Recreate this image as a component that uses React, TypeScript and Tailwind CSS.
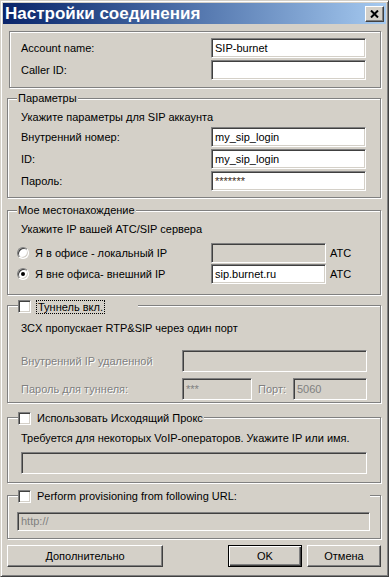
import React from "react";

const SUNKEN =
  "border border-t-[#808080] border-l-[#808080] border-b-white border-r-white shadow-[inset_1px_1px_0_#404040,inset_-1px_-1px_0_#d4d0c8]";
const GROUP =
  "border border-[#808080] shadow-[inset_1px_1px_0_#fff,1px_1px_0_#fff] flex flex-col";
const DIS = "text-[#808080] [text-shadow:1px_1px_0_#fff]";

function Field({
  className,
  value = "",
  disabled = false,
  valueClass = "",
}: {
  className: string;
  value?: string;
  disabled?: boolean;
  valueClass?: string;
}) {
  return (
    <div
      className={`${SUNKEN} ${className} ${
        disabled ? "bg-[#d4d0c8] text-[#808080]" : "bg-white text-black"
      } flex items-center pl-[3px] overflow-hidden whitespace-nowrap`}
    >
      <span className={valueClass}>{value}</span>
    </div>
  );
}

function Check() {
  return <div className={`${SUNKEN} w-[13px] h-[13px] bg-white shrink-0`} />;
}

function Radio({ checked = false }: { checked?: boolean }) {
  return (
    <div className="w-[12px] h-[12px] rounded-full border border-t-[#808080] border-l-[#808080] border-b-white border-r-white shadow-[inset_1px_1px_0_#404040,inset_-1px_-1px_0_#d4d0c8] bg-white flex items-center justify-center shrink-0">
      {checked && <div className="w-[4px] h-[4px] rounded-full bg-black" />}
    </div>
  );
}

export default function App() {
  return (
    <div className="w-[389px] h-[577px] bg-[#d4d0c8] border border-t-[#d4d0c8] border-l-[#d4d0c8] border-b-[#404040] border-r-[#404040] shadow-[inset_1px_1px_0_#fff,inset_-1px_-1px_0_#808080] p-[2px] flex flex-col font-['Liberation_Sans',Arial,sans-serif] text-[11px] leading-[15px] text-black overflow-hidden">
      {/* Title bar */}
      <div className="h-[21px] shrink-0 flex items-center pl-[2px] pr-[2px] bg-gradient-to-r from-[#0a246a] to-[#a6caf0]">
        <span className="text-white font-bold text-[17px] leading-[21px] flex-1">
          Настройки соединения
        </span>
        <div className="w-[19px] h-[16px] bg-[#d4d0c8] border border-t-white border-l-white border-b-[#404040] border-r-[#404040] shadow-[inset_-1px_-1px_0_#808080] flex items-center justify-center">
          <svg width="9" height="8" viewBox="0 0 9 8">
            <path d="M1 0.5 L8 7.5 M8 0.5 L1 7.5" stroke="#000" strokeWidth="2" />
          </svg>
        </div>
      </div>

      {/* Group 1 */}
      <div className={`${GROUP} ml-[6px] mt-[7px] w-[372px] h-[57px] pt-[6px] pl-[11px] gap-[2px] shrink-0`}>
        <div className="flex items-center h-[20px]">
          <span className="w-[190px]">Account name:</span>
          <Field className="w-[155px] h-[20px]" value="SIP-burnet" />
        </div>
        <div className="flex items-center h-[20px]">
          <span className="w-[190px]">Caller ID:</span>
          <Field className="w-[155px] h-[20px]" />
        </div>
      </div>

      {/* Group 2 */}
      <div className={`${GROUP} ml-[4px] mt-[10px] w-[374px] h-[100px] shrink-0`}>
        <span className="-mt-[8px] ml-[9px] self-start px-[1px] bg-[#d4d0c8]">Параметры</span>
        <div className="pl-[13px] mt-[4px]">Укажите параметры для SIP аккаунта</div>
        <div className="pl-[13px] mt-[2px] flex flex-col gap-[2px]">
          <div className="flex items-center h-[20px]">
            <span className="w-[190px]">Внутренний номер:</span>
            <Field className="w-[155px] h-[20px]" value="my_sip_login" />
          </div>
          <div className="flex items-center h-[20px]">
            <span className="w-[190px]">ID:</span>
            <Field className="w-[155px] h-[20px]" value="my_sip_login" />
          </div>
          <div className="flex items-center h-[20px]">
            <span className="w-[190px]">Пароль:</span>
            <Field className="w-[155px] h-[20px]" value="*******" valueClass="text-[11px] text-[#3a2a20]" />
          </div>
        </div>
      </div>

      {/* Group 3 */}
      <div className={`${GROUP} ml-[4px] mt-[12px] w-[374px] h-[85px] shrink-0`}>
        <span className="-mt-[8px] ml-[9px] self-start px-[1px] bg-[#d4d0c8]">Мое местонахождение</span>
        <div className="pl-[13px] mt-[4px]">Укажите IP вашей АТС/SIP сервера</div>
        <div className="pl-[9px] mt-[6px] flex flex-col gap-[1px]">
          <div className="flex items-center h-[20px]">
            <div className="w-[194px] flex items-center gap-[6px]">
              <Radio />
              <span>Я в офисе - локальный IP</span>
            </div>
            <Field className="w-[115px] h-[20px]" disabled />
            <span className="ml-[4px]">АТС</span>
          </div>
          <div className="flex items-center h-[20px]">
            <div className="w-[194px] flex items-center gap-[6px]">
              <Radio checked />
              <span>Я вне офиса- внешний IP</span>
            </div>
            <Field className="w-[115px] h-[20px]" value="sip.burnet.ru" />
            <span className="ml-[4px]">АТС</span>
          </div>
        </div>
      </div>

      {/* Group 4 */}
      <div className={`${GROUP} ml-[4px] mt-[10px] w-[374px] h-[98px] shrink-0`}>
        <div className="-mt-[7px] ml-[10px] self-start w-[120px] bg-[#d4d0c8] flex items-center h-[15px]">
          <Check />
          <span className="ml-[5px] px-[1px] border border-dotted border-black leading-[12px]">Туннель вкл.</span>
        </div>
        <div className="pl-[13px] mt-[7px]">3CX пропускает RTP&amp;SIP через один порт</div>
        <div className="pl-[13px] mt-[14px] flex flex-col gap-[6px]">
          <div className="flex items-center h-[22px]">
            <span className={`w-[161px] ${DIS}`}>Внутренний IP удаленной</span>
            <Field className="w-[185px] h-[22px]" disabled />
          </div>
          <div className="flex items-center h-[22px]">
            <span className={`w-[161px] ${DIS}`}>Пароль для туннеля:</span>
            <Field className="w-[70px] h-[22px]" disabled value="***" />
            <span className={`w-[41px] pl-[6px] ${DIS}`}>Порт:</span>
            <Field className="w-[74px] h-[22px]" disabled value="5060" />
          </div>
        </div>
      </div>

      {/* Group 5 */}
      <div className={`${GROUP} ml-[4px] mt-[14px] w-[374px] h-[66px] shrink-0`}>
        <div className="-mt-[7px] ml-[10px] self-start pr-[1px] bg-[#d4d0c8] flex items-center h-[15px] whitespace-nowrap">
          <Check />
          <span className="ml-[6px]">Использовать Исходящий Прокс</span>
        </div>
        <div className="pl-[13px] mt-[5px]">Требуется для некоторых VoIP-операторов. Укажите IP или имя.</div>
        <div className="pl-[13px] mt-[6px]">
          <Field className="w-[346px] h-[22px]" disabled />
        </div>
      </div>

      {/* Group 6 */}
      <div className={`${GROUP} ml-[4px] mt-[12px] w-[374px] h-[44px] shrink-0`}>
        <div className="-mt-[7px] ml-[10px] self-start w-[352px] bg-[#d4d0c8] flex items-center h-[15px] whitespace-nowrap">
          <Check />
          <span className="ml-[6px]">Perform provisioning from following URL:</span>
        </div>
        <div className="pl-[9px] mt-[8px]">
          <Field className="w-[353px] h-[19px]" disabled value="http://" />
        </div>
      </div>

      {/* Buttons */}
      <div className="flex mt-[6px] ml-[4px] shrink-0">
        <div className="w-[156px] h-[22px] flex items-center justify-center border border-t-white border-l-white border-b-[#404040] border-r-[#404040] shadow-[inset_-1px_-1px_0_#808080]">
          Дополнительно
        </div>
        <div className="ml-[65px] w-[74px] h-[22px] flex items-center justify-center border border-black shadow-[inset_1px_1px_0_#fff,inset_-1px_-1px_0_#404040,inset_-2px_-2px_0_#808080]">
          OK
        </div>
        <div className="ml-[5px] w-[74px] h-[22px] flex items-center justify-center border border-t-white border-l-white border-b-[#404040] border-r-[#404040] shadow-[inset_-1px_-1px_0_#808080]">
          Отмена
        </div>
      </div>
    </div>
  );
}
